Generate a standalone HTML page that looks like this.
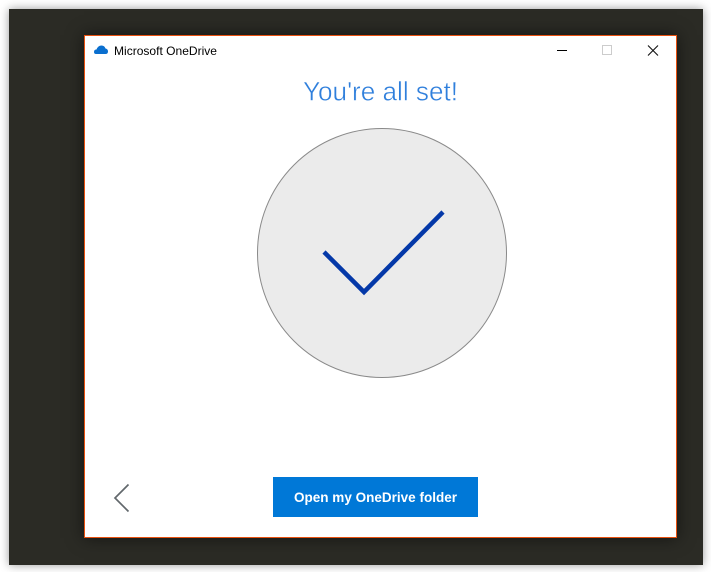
<!DOCTYPE html>
<html><head><meta charset="utf-8"><style>
html,body{margin:0;padding:0;background:#fff;width:711px;height:572px;overflow:hidden}
#bg{position:absolute;left:9px;top:9px;width:694px;height:556px;background:#2b2b25;box-shadow:0 0 9px rgba(0,0,0,.4)}
#win{position:absolute;left:84px;top:35px;width:591px;height:501px;background:#fff;border:1px solid #e8500f;box-shadow:0 0 16px rgba(0,0,0,.55)}
svg{position:absolute;left:0;top:0}
</style></head><body>
<div id="bg"></div><div id="win"></div>
<svg width="711" height="572" viewBox="0 0 711 572" font-family="'Liberation Sans',sans-serif">
<path d="M94 52 Q94 49.500 96.500 49.500 Q98 45.500 101.500 45.500 Q104.500 45.500 105.500 48.500 Q108 49 108 51.500 Q108 54 105.500 54 L96 54 Q94 54 94 52Z" fill="#0a6fcf"/>
<text x="114" y="55" font-size="12" textLength="103" lengthAdjust="spacingAndGlyphs" fill="#000">Microsoft OneDrive</text>
<rect x="557" y="50" width="10" height="1" fill="#000"/>
<rect x="602.500" y="45.500" width="9" height="9" fill="none" stroke="#ccc"/>
<path d="M648 45.500 L658 55.500 M658 45.500 L648 55.500" stroke="#111" stroke-width="1.100" fill="none"/>
<text x="303" y="100.500" font-size="27" textLength="155" lengthAdjust="spacingAndGlyphs" fill="#2f7fdc" stroke="#fff" stroke-width=".45">You're all set!</text>
<circle cx="382" cy="253" r="124.500" fill="#ebebeb" stroke="#8a8a8a" stroke-width="1"/>
<path d="M324 252 L364 292 L443 212" fill="none" stroke="#0438a8" stroke-width="4.500"/>
<path d="M128.500 484.500 L115 498 L128.500 511.500" fill="none" stroke="#62686c" stroke-width="1.700"/>
<rect x="273" y="477" width="205" height="40" fill="#0078d7"/>
<text x="294" y="502" font-size="13.500" font-weight="700" textLength="163" lengthAdjust="spacingAndGlyphs" fill="#fff">Open my OneDrive folder</text>
</svg>
</body></html>
